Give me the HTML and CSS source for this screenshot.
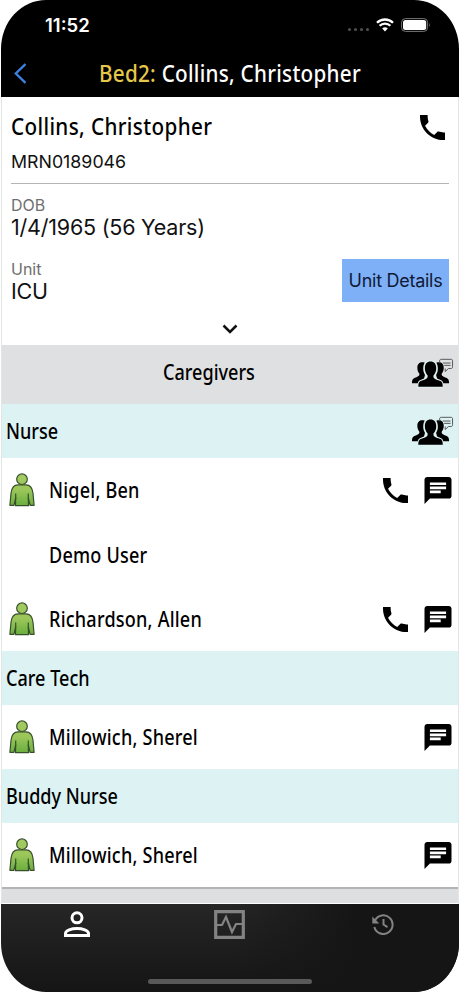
FILE: index.html
```html
<!DOCTYPE html>
<html lang="en">
<head>
<meta charset="utf-8">
<title>Patient details</title>
<link rel="stylesheet" href="styles.css">
</head>
<body>
<svg class="defs" aria-hidden="true">
  <defs>
    <linearGradient id="green" gradientUnits="userSpaceOnUse" x1="0" y1="0" x2="0" y2="34"><stop offset="0" stop-color="#a3cc62"/><stop offset=".5" stop-color="#9bc65a"/><stop offset="1" stop-color="#65ac3c"/></linearGradient>
    <symbol id="phone" viewBox="3 3 18 18"><path d="M6.620 10.790c1.440 2.830 3.760 5.140 6.590 6.590l2.200-2.200c.27-.27.67-.36 1.020-.24 1.120.37 2.330.57 3.570.57h1V21h-1C10.610 21 3 13.390 3 4V3h5.500v1c0 1.250.2 2.450.57 3.570.11.35.03.74-.25 1.020z"/></symbol>
    <symbol id="chat" viewBox="2 2 20 20"><path fill-rule="evenodd" d="M4 2h16c1.100 0 2 .9 2 2v12c0 1.100-.9 2-2 2H6l-4 4V4c0-1.100.9-2 2-2zm2 4v2h12V6zm0 3v2h12V9zm0 3v2h8v-2z"/></symbol>
    <symbol id="group" viewBox="0 0 44 30">
      <g><path d="M1 25.500c0-4 1-5 4-6 3-1.200 4-2 3.500-4C7 13.500 6.500 11.500 6.500 9.500c0-3.500 2-5.500 5-5.500s5 2 5 6.500L14 18l-2 7.500z"/><path d="M39 25.500c0-4-1-5-4-6-3-1.200-4-2-3.500-4 1.500-2 2-4 2-6 0-3.500-2-5.500-5-5.500s-5 2-5 6.500l2.500 7.500 2 7.500z"/></g>
      <path class="halo" d="M6.500 30c0-6 1.300-7.600 5-8.600 3-.9 4-1.500 3.500-3.300-1.600-2.100-2.500-4.500-2.500-7.600 0-5.500 2.500-8.500 7.500-8.500s7.500 3 7.500 8.500c0 3.100-.9 5.500-2.500 7.600-.5 1.800.5 2.400 3.500 3.300 3.700 1 5 2.600 5 8.600z"/>
      <path d="M7.500 29c0-4.300 1-5.600 4.500-6.600s5.500-2.100 5-4.900c-1.700-2-2.800-4.500-2.800-7.200 0-4.500 2-7 5.800-7s5.800 2.500 5.800 7c0 2.700-1.100 5.200-2.800 7.200-.5 2.800 1.500 3.900 5 4.900s4.500 2.300 4.500 6.600z"/>
      <path class="bubble" d="M31 1h9.800c1.200 0 1.700.5 1.700 1.700v6c0 1.200-.5 1.700-1.700 1.700h-2.500L35 13.500v-3.100M29.300 5V2.700C29.300 1.500 29.800 1 31 1M32.500 4.800h8M34 7.200h6.500"/>
    </symbol>
    <symbol id="person" viewBox="0 0 26 34"><g fill="url(#green)" stroke="#384f2c" stroke-width="1.200" stroke-linejoin="round"><path d="M9 11.800h8c4.500 0 6.500 4 7 8.500l1.100 12h-4L19.300 25l.2 7.700h-13l.2-7.700-1.800 7.300h-4l1.100-12c.5-4.500 2.500-8.500 7-8.500z"/><circle cx="13" cy="6.200" r="5.300"/><path fill="none" d="M6.700 26v-5.500M19.300 26v-5.500"/></g></symbol>
  </defs>
</svg>
<div class="device">
  <header class="top">
    <div class="status">
      <span class="time">11:52</span>
      <span class="dots"><i></i><i></i><i></i><i></i></span>
      <svg class="wifi" viewBox="0 0 18 14"><path d="M9 13.400l2.800-2.900a4 4 0 0 0-5.600 0z" fill="#fff"/><path d="M3.600 7.800a7.700 7.700 0 0 1 10.800 0M1 4.800a11.400 11.400 0 0 1 16 0" fill="none" stroke="#fff" stroke-width="2.300"/></svg>
      <svg class="battery" viewBox="0 0 30 14"><rect x=".6" y=".6" width="26" height="12.800" rx="3.800" fill="none" stroke="#777"/><rect x="2" y="2" width="23.200" height="10" rx="2.500" fill="#fff"/><path d="M28 4.800q1.600 2.200 0 4.400z" fill="#777"/></svg>
    </div>
    <div class="titlebar">
      <svg class="back" viewBox="0 0 13 21"><path d="M11.500 1.200L1.800 10.500l9.700 9.300" fill="none" stroke="#3a83e4" stroke-width="2.300"/></svg>
      <h1 class="narrow title"><span class="bed">Bed2:</span> Collins, Christopher</h1>
    </div>
  </header>
  <main class="content">
    <section class="card">
      <div class="identity">
        <div><h2 class="narrow name">Collins, Christopher</h2><p class="mrn">MRN0189046</p></div>
        <svg class="phone"><use href="#phone"/></svg>
      </div>
      <div class="field"><span class="label">DOB</span><span class="value">1/4/1965 (56 Years)</span></div>
      <div class="unit">
        <div class="field"><span class="label">Unit</span><span class="value">ICU</span></div>
        <button class="details">Unit Details</button>
      </div>
      <svg class="chevron" viewBox="0 0 16 10"><path d="M1.500 1.500L8 8l6.500-6.500" fill="none" stroke="#111" stroke-width="2.500"/></svg>
    </section>
    <div class="section caregivers"><span class="narrow">Caregivers</span><svg class="group"><use href="#group"/></svg></div>
    <div class="section"><span class="narrow">Nurse</span><svg class="group"><use href="#group"/></svg></div>
    <div class="row"><svg class="person"><use href="#person"/></svg><span class="narrow">Nigel, Ben</span><svg class="phone"><use href="#phone"/></svg><svg class="chat"><use href="#chat"/></svg></div>
    <div class="row"><span class="person"></span><span class="narrow">Demo User</span></div>
    <div class="row"><svg class="person"><use href="#person"/></svg><span class="narrow">Richardson, Allen</span><svg class="phone"><use href="#phone"/></svg><svg class="chat"><use href="#chat"/></svg></div>
    <div class="section"><span class="narrow">Care Tech</span></div>
    <div class="row"><svg class="person"><use href="#person"/></svg><span class="narrow">Millowich, Sherel</span><svg class="chat"><use href="#chat"/></svg></div>
    <div class="section"><span class="narrow">Buddy Nurse</span></div>
    <div class="row"><svg class="person"><use href="#person"/></svg><span class="narrow">Millowich, Sherel</span><svg class="chat"><use href="#chat"/></svg></div>
    <div class="next"></div>
  </main>
  <nav class="tabs">
    <div class="tab"><svg class="user" viewBox="0 0 26 27"><g fill="none" stroke="#fff" stroke-width="3"><circle cx="13" cy="6.800" r="5"/><path d="M1.500 24.500v-2c0-3 6-5 11.500-5s11.500 2 11.500 5v2z"/></g></svg></div>
    <div class="tab"><svg class="vitals" viewBox="0 0 31 29"><path d="M1.700 1.700h27.600v25.600H1.700z" fill="none" stroke="#838383" stroke-width="3.200"/><path d="M3 15h5l4-8 6 15 4-8h7" fill="none" stroke="#838383" stroke-width="2.200"/></svg></div>
    <div class="tab"><svg class="history" viewBox="0 0 22 22"><path d="M3 7.500A9.300 9.300 0 1 1 2.300 14M11.500 6v5.500l4 2.600" fill="none" stroke="#838383" stroke-width="2"/><path d="M.3 3.500v7h7z" fill="#838383"/></svg></div>
    <span class="home"></span>
  </nav>
</div>
</body>
</html>
```

FILE: styles.css
```css
* { box-sizing: border-box; }
body { margin: 0; background: #fff; font-family: Inter, "Liberation Sans", sans-serif; color: #111; }
h1, h2, p { margin: 0; }
.defs { position: absolute; width: 0; height: 0; }
.device { width: 458px; height: 992px; margin: 0 1px; display: flex; flex-direction: column; overflow: hidden; border-radius: 45px / 49px; background: #fff; }
.top { height: 97px; background: #000; color: #fff; }
.status { height: 50px; display: flex; align-items: center; padding: 0 28px 0 44px; }
.time { font-size: 18.500px; font-weight: 600; margin-right: auto; }
.dots { display: flex; gap: 2.500px; margin: 9px 7px 0 0; }
.dots i { width: 3.500px; height: 3.500px; border-radius: 50%; background: #505050; }
.wifi { width: 18px; height: 14px; margin-right: 7px; }
.battery { width: 30px; height: 14px; }
.titlebar { height: 46px; display: flex; align-items: center; padding: 0 13px; }
.back { width: 13px; height: 21px; margin-right: 72px; }
.narrow { font-family: "Noto Sans", sans-serif; font-weight: 500; font-size: 21px; line-height: 28px; letter-spacing: .250px; color: #000; white-space: nowrap; transform: scaleX(.86); transform-origin: left center; }
.title { font-size: 24px; letter-spacing: .330px; color: #fff; }
.bed { color: #e5c84a; }
.content { height: 807px; border: solid #e3e4e4; border-width: 0 1px; }
.card { height: 248px; padding: 12px 9px 0 9px; }
.identity { height: 75px; display: flex; justify-content: space-between; border-bottom: 1.500px solid #b5b5b5; }
.name { font-size: 24px; line-height: 34px; letter-spacing: .450px; }
.mrn { font-size: 17.800px; line-height: 22px; margin-top: 8px; }
.phone { width: 25px; height: 25px; }
.identity .phone { margin: 6px 4px 0 0; }
.field { display: flex; flex-direction: column; height: 65px; padding-top: 12px; }
.label { font-size: 16px; line-height: 19px; color: #6f6f6f; }
.value { font-size: 21.500px; line-height: 25px; letter-spacing: -.220px; }
.unit { display: flex; justify-content: space-between; }
.unit .field { padding-top: 11px; }
.details { width: 107px; height: 43px; margin-top: 10px; padding: 0; border: 0; background: #7eb0f7; color: #101936; font: 18px Inter, sans-serif; letter-spacing: -.280px; white-space: nowrap; }
.chevron { display: block; width: 16px; height: 10px; margin: 10px auto 0; }
.section { height: 53.700px; background: #dcf2f3; display: flex; align-items: center; padding: 0 4px; }
.section .narrow { letter-spacing: 0; }
.section .group { margin-left: auto; }
.caregivers { height: 59px; background: #dfe0e2; padding-left: 161px; }
.caregivers .narrow { margin-top: -6px; }
.group { width: 43px; height: 30px; margin-top: 1px; }
.caregivers .group { margin-top: -4px; }
.halo { fill: #dcf2f3; }
.caregivers .halo { fill: #dfe0e2; }
.bubble { fill: none; stroke: #555; stroke-width: 1; }
.row { height: 64.400px; display: flex; align-items: center; padding: 1px 6px 0 7px; }
.person { width: 26px; height: 34px; margin-right: 14px; }
.row .narrow { margin-right: auto; }
.chat { width: 28px; height: 27px; margin-left: 16px; }
.next { height: 16px; border-top: 2px solid #b3b4b5; background: #dddfe0; }
.tabs { position: relative; height: 88px; display: grid; grid-template-columns: repeat(3, 1fr); background: linear-gradient(90deg, transparent 50%, #151515 78%), linear-gradient(#262626, #151515); }
.tab { display: flex; justify-content: center; }
.user { width: 26px; height: 27px; margin-top: 7px; }
.vitals { width: 31px; height: 29px; margin-top: 6px; }
.history { width: 22px; height: 22px; margin-top: 9px; }
.home { position: absolute; left: 147px; bottom: 8px; width: 164px; height: 5px; border-radius: 3px; background: #595959; }
```
